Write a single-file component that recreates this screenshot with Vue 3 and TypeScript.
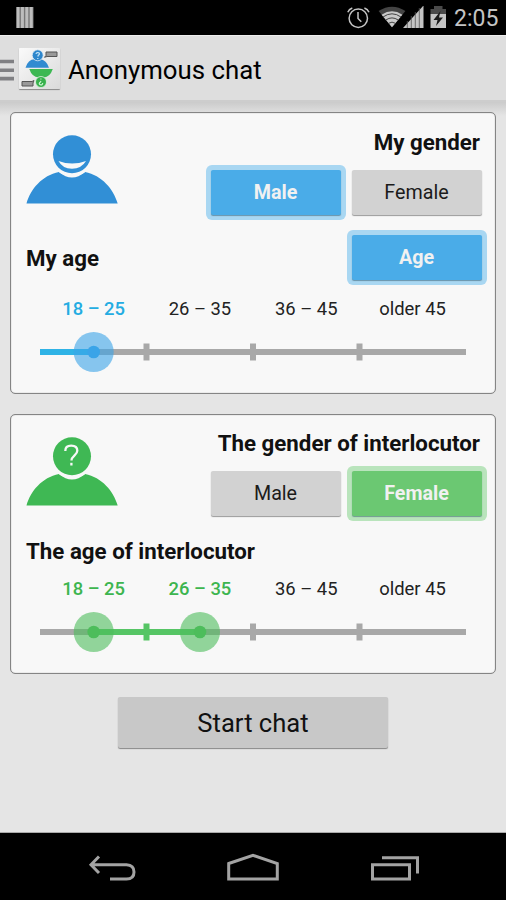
<script setup lang="ts">
interface Panel {
  id: string
  genderTitle: string
  ageTitle: string
  accent: 'blue' | 'green'
  selected: string
  ageToggle: boolean
  activeAges: number[]
  from: number
  to: number
}

const ages: string[] = ['18 – 25', '26 – 35', '36 – 45', 'older 45']
const genders: string[] = ['Male', 'Female']

const panels: Panel[] = [
  {
    id: 'me', genderTitle: 'My gender', ageTitle: 'My age', accent: 'blue',
    selected: 'Male', ageToggle: true, activeAges: [0], from: 0, to: 53.5,
  },
  {
    id: 'other', genderTitle: 'The gender of interlocutor', ageTitle: 'The age of interlocutor', accent: 'green',
    selected: 'Female', ageToggle: false, activeAges: [0, 1], from: 53.5, to: 160,
  },
]

const ticks: number[] = [106.5, 213, 319.5]
const isCovered = (p: Panel, t: number): boolean => t > p.from && t < p.to
const thumbs = (p: Panel): number[] => p.activeAges.map((i) => 53.7 + i * 106.3)
</script>

<template>
  <div class="screen">
    <header class="status">
      <svg class="bars" width="18" height="22" viewBox="0 0 18 22">
        <rect x="0.500" y="0" width="17" height="21" fill="#777" />
        <path d="M2 0V21M6.400 0V21M10.800 0V21M15.200 0V21" stroke="#bdbdbd" stroke-width="3" />
      </svg>
      <div class="status-right">
        <svg width="102" height="24" viewBox="346 6 102 24">
          <g fill="none" stroke="#c4c4c4" stroke-width="1.5">
            <circle cx="358.3" cy="18.2" r="9.2" />
            <path d="M358 12V18.4L361.3 21.8M347.8 12.3Q349 9.2 352.3 8M364.4 8Q367.7 9.2 369 12.3" />
          </g>
          <path d="M378.6 11Q392 2.500 405.400 11L392 27.300Z" fill="#444" />
          <path d="M381.600 14.700Q392 7.800 402.400 14.700L392 27.300Z" fill="#c9c9c9" />
          <path d="M383 17Q392 10.600 401 17M385.800 20Q392 15.800 398.200 20M388.600 23.300Q392 21 395.400 23.300" fill="none" stroke="#333" stroke-width=".9" />
          <path d="M403 28L423.500 5.500V28Z" fill="#c4c4c4" />
          <path d="M407.300 21V28M411.300 16V28M415.300 12V28M419.300 8V28" stroke="#555" stroke-width=".8" />
          <path d="M430.500 9H434V6H442.500V9H446V14H430.500Z" fill="#4a4a4a" />
          <rect x="430.500" y="14" width="15.500" height="14" fill="#c4c4c4" />
          <path d="M440.500 11L433.500 20H437.500L436 26L443 17.500H439Z" fill="#1b1b1b" />
        </svg>
        <span class="clock">2:05</span>
      </div>
    </header>

    <div class="action-bar">
      <svg class="drawer" width="14" height="22" viewBox="0 0 14 22">
        <path d="M0 2.500H14M0 11.200H14M0 19.600H14" stroke="#808083" stroke-width="3.600" />
      </svg>
      <div class="app-icon">
        <svg width="41" height="41" viewBox="0 0 41 41">
          <path d="M6.500 19.800Q9 11.500 15.500 11.300H21Q27.500 12 30 19.800Z" fill="#318bd1" />
          <path d="M10.300 21H33.800Q31 29 24.800 29.500H19.500Q13 29 10.300 21Z" fill="#3db853" />
          <circle cx="18.700" cy="7.300" r="5.500" fill="#2d86cc" stroke="#e4eef5" stroke-width=".8" />
          <circle cx="22" cy="34" r="5.500" fill="#38b14d" stroke="#e4f2e6" stroke-width=".8" />
          <path d="M17 6Q17.200 4.500 18.800 4.500C21.300 4.700 20.500 6.700 19.300 7.300L18.800 8.500M18.800 10V11" fill="none" stroke="#c8e7fa" stroke-width="1.200" />
          <path d="M23.700 35Q23.500 37 21.800 36.800C19.400 36.500 20.200 34.500 21.500 34L21.900 33M21.900 31.500V30.500" fill="none" stroke="#c9f5cf" stroke-width="1.200" />
          <path d="M28 4H38V8.500H28L25.500 9.300L27 7.500V4ZM3 33.500H13L15 32.500L14 35V38H3Z" fill="#999" stroke="#555" stroke-width="1" />
        </svg>
      </div>
      <h1>Anonymous chat</h1>
    </div>

    <main>
      <section v-for="p in panels" :key="p.id" class="card" :class="[p.accent, p.id]">
        <div class="head">
          <svg class="avatar" width="92" height="70" viewBox="0 0 92 70">
            <path d="M0.500 68.500C4.500 54 16 40.500 33 37Q46 48 59 37C76 40.500 87.500 54 91.700 68.500Z" class="figure" />
            <circle cx="46" cy="19.500" r="22" class="ring" />
            <circle cx="46" cy="19.200" r="19" class="figure" />
            <path v-if="p.id === 'me'" d="M32.500 26Q46 31 60 26Q55.500 33.700 46 33.700T32.500 26Z" class="mark-fill" />
            <g v-else class="mark">
              <path d="M39.300 14C39.300 10.300 41.500 8.700 45.200 8.700C49 8.700 51.300 10.700 51.300 13.800C51.300 18.200 45.500 18.500 45.500 23.600" />
              <path d="M45.400 25.800V28.500" />
            </g>
          </svg>
          <div class="gender">
            <h2>{{ p.genderTitle }}</h2>
            <div class="choices">
              <button v-for="g in genders" :key="g" class="btn" :class="{ on: g === p.selected }"><span>{{ g }}</span></button>
            </div>
          </div>
        </div>
        <div class="age-row">
          <h2>{{ p.ageTitle }}</h2>
          <button v-if="p.ageToggle" class="btn on"><span>Age</span></button>
        </div>
        <div class="labels">
          <span v-for="(a, i) in ages" :key="a" :class="{ active: p.activeAges.includes(i) }"><b>{{ a }}</b></span>
        </div>
        <svg class="slider" width="426" height="42" viewBox="0 0 426 42">
          <rect x="0" y="18" width="426" height="6" fill="#a8a8a8" />
          <rect :x="p.from" y="18" :width="p.to - p.from" height="6" class="range" />
          <rect v-for="t in ticks" :key="t" :x="t - 3" y="12.500" width="6" height="17" :class="isCovered(p, t) ? 'range' : 'tick'" />
          <g v-for="x in thumbs(p)" :key="x" class="thumb">
            <circle :cx="x" cy="21" r="20" class="halo" />
            <circle :cx="x" cy="21" r="6.300" class="dot" />
          </g>
        </svg>
      </section>
      <button class="start"><span>Start chat</span></button>
    </main>

    <nav>
      <svg width="506" height="67" viewBox="0 833 506 67" fill="none" stroke="#a3a3a3" stroke-width="3">
        <path d="M99 856.500L91 864.700L99 873M92 864.700H126.500Q134 865 134 872T126.500 879H110" />
        <path d="M228.700 863.500L253 855.300L277.300 863.500V879H228.700Z" />
        <path d="M372.500 864.700H409.500V879H372.500ZM382 857.700H417.500V873.500" />
      </svg>
    </nav>
  </div>
</template>

<style>
body { margin: 0; }
</style>

<style scoped>
.screen {
  width: 506px;
  height: 900px;
  display: flex;
  flex-direction: column;
  overflow: hidden;
  background: #e5e5e5;
  color: #111;
  font-family: Roboto, "Liberation Sans", sans-serif;
}
h1, h2 { margin: 0; white-space: nowrap; }
svg { display: block; flex: none; }
.status {
  height: 35px;
  flex: none;
  box-sizing: border-box;
  padding: 0 9px 0 16px;
  background: #000;
  display: flex;
  justify-content: space-between;
}
.bars { margin-top: 7px; }
.status-right { display: flex; padding-top: 6px; }
.clock { width: 43px; margin-left: 6px; font-size: 23px; line-height: 26px; color: #c4c4c4; white-space: nowrap; }
.action-bar {
  height: 67px;
  flex: none;
  box-sizing: border-box;
  border-top: 1px solid #eee;
  border-bottom: 2px solid #cdcdcd;
  background: #dedede;
  display: flex;
  align-items: center;
}
.drawer { margin-top: 3px; }
.app-icon {
  width: 41px;
  height: 41px;
  margin: 0 8px 0 5px;
  border-radius: 1px;
  background: linear-gradient(135deg, #fafafa, #dadada);
  box-shadow: 0 1px 1px #888;
}
h1 { font-size: 25.800px; line-height: 34px; font-weight: 400; color: #000; padding-top: 3px; }
main {
  flex: 1;
  box-sizing: border-box;
  padding: 10px 10px 0;
  background: linear-gradient(#cbcbcb, #e5e5e5 14px);
  display: flex;
  flex-direction: column;
  align-items: center;
  border-bottom: 1px solid #aaa;
}
.card {
  width: 486px;
  height: 282px;
  flex: none;
  box-sizing: border-box;
  border: 1px solid #858585;
  border-radius: 5px;
  background: #f8f8f8;
  box-shadow: inset 0 0 1px #777;
  margin-bottom: 20px;
  padding: 15px 9px 0 15px;
}
.card.other { height: 260px; margin-bottom: 23px; padding-top: 14px; }
.blue { --main: #318fd6; --btn: #4aace8; --glow: #a9d7f2; --text: #24ace2; --range: #2fb3e6; --dot: #3aa4e8; }
.green { --main: #3fb854; --btn: #6bc872; --glow: #b9e4bc; --text: #3db54f; --range: #56c565; --dot: #4dbd5b; }
.head { display: flex; justify-content: space-between; height: 93px; }
.avatar { margin: 7px 0 0 0; }
.other .avatar { margin-top: 8px; }
.figure { fill: var(--main); }
.ring, .mark-fill { fill: #f8f8f8; }
.mark { fill: none; stroke: #f8f8f8; stroke-width: 2.300; }
.gender { display: flex; flex-direction: column; align-items: flex-end; }
h2 { font-size: 22.300px; line-height: 28px; font-weight: 700; }
.gender h2 { margin-right: 6px; }
.choices { display: flex; gap: 11px; padding: 14px 4.500px 0 0; }
.btn {
  width: 130px;
  height: 45px;
  padding: 0;
  border: 0;
  border-radius: 2px;
  background: #d2d2d2;
  box-shadow: 0 1px 1px #999;
  font: 400 19.700px/45px Roboto, sans-serif;
  color: #1b1b1b;
}
.btn.on {
  background: var(--btn);
  color: #f1f1f1;
  font-weight: 700;
  box-shadow: 0 1px 1px rgba(40, 80, 100, 0.5), 0 0 0 5px var(--glow);
}
.age-row { display: flex; justify-content: space-between; height: 66px; padding: 14px 4.500px 0 0; box-sizing: border-box; }
.age-row h2 { padding-top: 9px; }
.other .age-row { height: 45px; padding-top: 6px; }
.labels { display: grid; grid-template-columns: repeat(4, 106.300px); margin-left: 14.500px; margin-top: 9px; height: 26px; line-height: 26px; }
.labels span { text-align: center; font-size: 18.400px; color: #222; }
.labels b { font-weight: 400; }
.labels .active { color: var(--text); }
.labels .active b { font-weight: 500; }
.slider { margin: 9px 0 0 14px; overflow: visible; }
.range { fill: var(--range); }
.tick { fill: #a8a8a8; }
.halo { fill: var(--dot); opacity: 0.600; }
.dot { fill: var(--dot); }
.start {
  width: 270px;
  height: 51px;
  padding: 0;
  border: 0;
  border-radius: 2px;
  background: #c8c8c8;
  box-shadow: 0 1px 1px #888;
  font: 400 25.600px/53px Roboto, sans-serif;
  color: #111;
}
nav { height: 67px; flex: none; background: #000; }
</style>
